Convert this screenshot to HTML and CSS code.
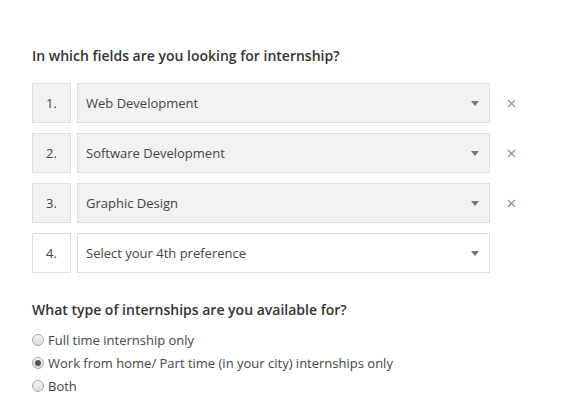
FILE: index.html
```html
<!DOCTYPE html>
<html>
<head>
<meta charset="utf-8">
<link rel="stylesheet" href="styles.css">
</head>
<body>
<div class="page">
  <h2 class="q q-fields">In which fields are you looking for internship?</h2>
  <div class="prefs">
    <div class="pref filled">
      <div class="num">1.</div>
      <div class="select"><span class="val">Web Development</span><span class="caret"></span></div>
      <svg class="remove" viewBox="0 0 9 9" width="9" height="9"><path d="M1 1L8 8M8 1L1 8"/></svg>
    </div>
    <div class="pref filled">
      <div class="num">2.</div>
      <div class="select"><span class="val">Software Development</span><span class="caret"></span></div>
      <svg class="remove" viewBox="0 0 9 9" width="9" height="9"><path d="M1 1L8 8M8 1L1 8"/></svg>
    </div>
    <div class="pref filled">
      <div class="num">3.</div>
      <div class="select"><span class="val">Graphic Design</span><span class="caret"></span></div>
      <svg class="remove" viewBox="0 0 9 9" width="9" height="9"><path d="M1 1L8 8M8 1L1 8"/></svg>
    </div>
    <div class="pref empty">
      <div class="num">4.</div>
      <div class="select"><span class="val">Select your 4th preference</span><span class="caret"></span></div>
    </div>
  </div>
  <h2 class="q q-type">What type of internships are you available for?</h2>
  <div class="radios">
    <label class="radio"><span class="dot"></span>Full time internship only</label>
    <label class="radio checked"><span class="dot"></span>Work from home/ Part time (in your city) internships only</label>
    <label class="radio"><span class="dot"></span>Both</label>
  </div>
</div>
</body>
</html>
```
FILE: styles.css
```css
html, body {
  margin: 0;
  padding: 0;
  background: #fff;
}
body {
  font-family: "Open Sans", "DejaVu Sans", sans-serif;
  color: #333;
}
.page {
  padding: 46px 0 0 32px;
}
.q {
  margin: 0;
  font-size: 14px;
  line-height: 20px;
  font-weight: 600;
  color: #333;
}
.prefs {
  margin-top: 17px;
  display: flex;
  flex-direction: column;
  gap: 10px;
}
.pref {
  display: flex;
  align-items: center;
  height: 40px;
}
.num {
  box-sizing: border-box;
  width: 39px;
  height: 40px;
  border: 1px solid #ddd;
  background: #f2f2f2;
  display: flex;
  align-items: center;
  justify-content: center;
  font-size: 13px;
  color: #444;
}
.select {
  box-sizing: border-box;
  margin-left: 6px;
  width: 413px;
  height: 40px;
  border: 1px solid #ddd;
  background: #f2f2f2;
  display: flex;
  align-items: center;
  justify-content: space-between;
  padding: 0 10px 0 8px;
  font-size: 13px;
  color: #444;
}
.empty .num, .empty .select {
  background: #fff;
}
.caret {
  width: 0;
  height: 0;
  border-left: 4px solid transparent;
  border-right: 4px solid transparent;
  border-top: 5px solid #777;
  margin-top: 1px;
}
.remove {
  margin-left: 17px;
  flex: none;
  stroke: #8296b0;
  stroke-width: 1.3;
  fill: none;
}
.q-type {
  margin-top: 27px;
}
.radios {
  margin-top: 8px;
  display: flex;
  flex-direction: column;
}
.radio {
  display: flex;
  align-items: center;
  height: 23px;
  font-size: 13px;
  color: #444;
}
.dot {
  box-sizing: border-box;
  width: 12px;
  height: 12px;
  border-radius: 50%;
  border: 1px solid #a9a9a9;
  background: linear-gradient(#f4f4f4, #dcdcdc);
  margin-right: 4px;
  display: flex;
  align-items: center;
  justify-content: center;
}
.checked .dot::after {
  content: "";
  width: 6px;
  height: 6px;
  border-radius: 50%;
  background: #555;
}
```
